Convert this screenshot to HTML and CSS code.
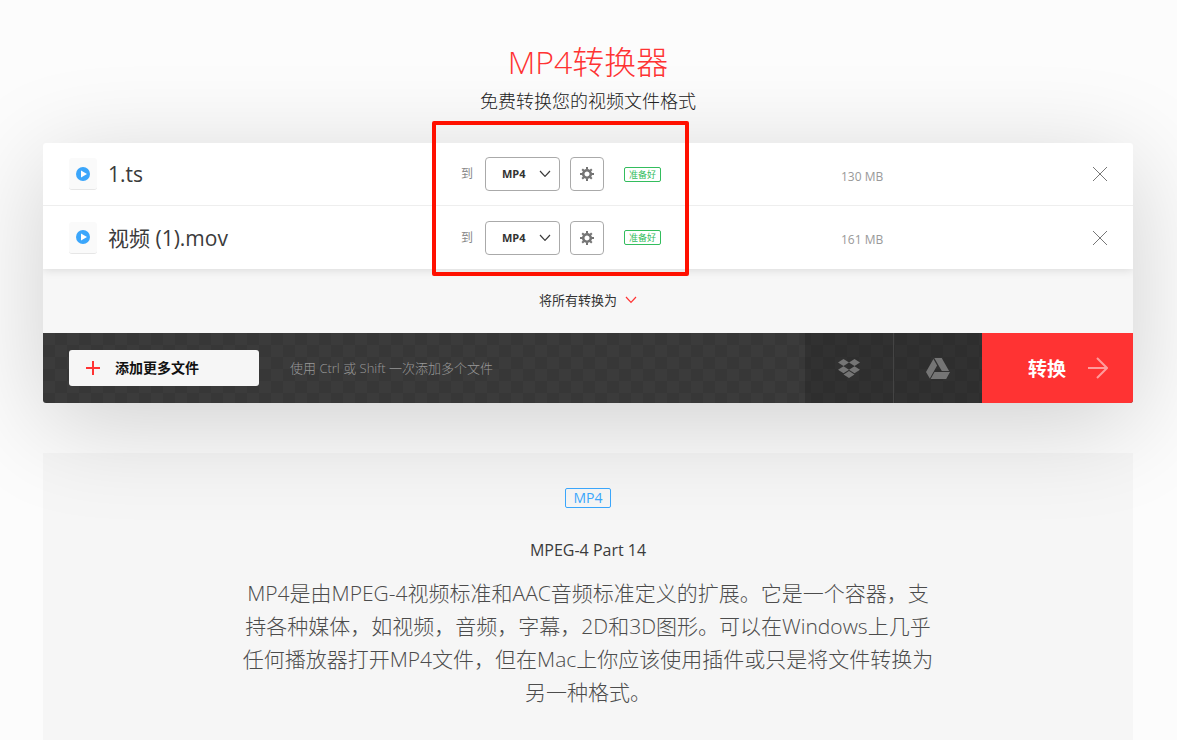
FILE: index.html
```html
<!DOCTYPE html>
<html lang="zh-CN">
<head>
<meta charset="utf-8">
<title>MP4转换器</title>
<link rel="stylesheet" href="styles.css">
</head>
<body>
<svg class="sprite" aria-hidden="true">
  <symbol id="play" viewBox="0 0 14 14"><circle cx="7" cy="7" r="7" fill="#3ba6fb"/><path d="M5 3.500 11 7 5 10.500z" fill="#fff"/></symbol>
  <symbol id="chevron" viewBox="0 0 12 8"><path d="M1 1l5 5.4L11 1" fill="none" stroke="currentColor" stroke-width="1.2"/></symbol>
  <symbol id="gear" viewBox="-7 -7 14 14">
    <circle r="3.8" fill="none" stroke="currentColor" stroke-width="2.6"/>
    <path d="M0-7v2.5M0 7V4.500M-7 0h2.500M7 0H4.500M-4.800-4.800l1.600 1.600M4.800 4.800 3.200 3.200M-4.800 4.800l1.600-1.600M4.800-4.800 3.200-3.200" stroke="currentColor" stroke-width="2"/>
  </symbol>
  <symbol id="cross" viewBox="0 0 14 14"><path d="M0 0l14 14M14 0 0 14" fill="none" stroke="currentColor"/></symbol>
</svg>
<main class="page">
  <header class="intro">
    <h1 class="title">MP4转换器</h1>
    <p class="subtitle">免费转换您的视频文件格式</p>
  </header>

  <section class="converter">
    <div class="card">
      <ul class="files">
        <li class="file">
          <div class="file-name"><span class="thumb"><svg class="play"><use href="#play"/></svg></span><span>1.ts</span></div>
          <div class="file-target">
            <label class="to" for="format-1">到</label>
            <div class="picker"><select class="format" id="format-1"><option>MP4</option></select><svg class="chevron"><use href="#chevron"/></svg></div>
            <button class="settings" type="button" aria-label="设置"><svg class="gear"><use href="#gear"/></svg></button>
            <span class="status">准备好</span>
          </div>
          <span class="size">130 MB</span>
          <button class="remove" type="button" aria-label="删除"><svg class="cross"><use href="#cross"/></svg></button>
        </li>
        <li class="file">
          <div class="file-name"><span class="thumb"><svg class="play"><use href="#play"/></svg></span><span>视频 (1).mov</span></div>
          <div class="file-target">
            <label class="to" for="format-2">到</label>
            <div class="picker"><select class="format" id="format-2"><option>MP4</option></select><svg class="chevron"><use href="#chevron"/></svg></div>
            <button class="settings" type="button" aria-label="设置"><svg class="gear"><use href="#gear"/></svg></button>
            <span class="status">准备好</span>
          </div>
          <span class="size">161 MB</span>
          <button class="remove" type="button" aria-label="删除"><svg class="cross"><use href="#cross"/></svg></button>
        </li>
      </ul>
      <div class="all">
        <button class="all-button" type="button">将所有转换为<svg class="all-chevron"><use href="#chevron"/></svg></button>
      </div>
      <div class="actions">
        <div class="adding">
          <button class="add" type="button"><svg class="plus" viewBox="0 0 14 14"><path d="M7 0v14M0 7h14" stroke="#f33" stroke-width="2"/></svg><span class="add-label">添加更多文件</span></button>
          <span class="hint">使用 Ctrl 或 Shift 一次添加多个文件</span>
        </div>
        <button class="cloud" type="button" aria-label="Dropbox"><svg class="dropbox" viewBox="0 0 22 19"><path d="M5.500 0 11 3.500 5.500 7 0 3.500zM16.500 0 22 3.500 16.500 7 11 3.500zM5.500 7.200 11 10.700 5.500 14.200 0 10.700zM16.500 7.200 22 10.700 16.500 14.200 11 10.700zM11 12 16.500 15.500 11 19 5.500 15.500z" fill="currentColor"/></svg></button>
        <button class="cloud cloud-last" type="button" aria-label="Google Drive"><svg class="drive" viewBox="0 0 24 21"><path d="M8.300 0h7.400l7.400 13h-7.300zM7.400 1l3.700 6.500L3.800 20.500 0 13.900zM8.500 14H24l-3.800 7H4.600z" fill="currentColor"/></svg></button>
        <button class="convert" type="button">转换<svg class="arrow" viewBox="0 0 20 22"><path d="M0 11h19M9 1l10 10L9 21" fill="none" stroke="currentColor" stroke-width="2"/></svg></button>
      </div>
    </div>
    <div class="highlight"></div>
  </section>

  <section class="info">
    <span class="tag">MP4</span>
    <h2 class="info-title">MPEG-4 Part 14</h2>
    <p class="info-text">MP4是由MPEG-4视频标准和AAC音频标准定义的扩展。它是一个容器，支持各种媒体，如视频，音频，字幕，2D和3D图形。可以在Windows上几乎任何播放器打开MP4文件，但在Mac上你应该使用插件或只是将文件转换为另一种格式。</p>
  </section>
</main>
</body>
</html>
```

FILE: styles.css
```css
* { box-sizing: border-box; }
body {
  margin: 0;
  background: #fcfcfc;
  color: #3b3b3b;
  font-family: "Open Sans", "Noto Sans CJK SC", sans-serif;
}
button, select { font-family: inherit; cursor: pointer; }
button { border: 0; padding: 0; background: none; }
svg { display: block; }
.sprite { position: absolute; width: 0; height: 0; }
.page { min-height: 100vh; padding: 40px 44px 0 43px; display: flex; flex-direction: column; }

.intro { text-align: center; padding-bottom: 29px; }
.title { margin: 0; color: #f33; font-size: 32px; font-weight: 300; line-height: 44px; }
.subtitle { margin: 4px 0 0; color: #222; font-size: 18px; font-weight: 300; line-height: 26px; }

.converter { position: relative; }
.card { border-radius: 3px; box-shadow: 0 20px 100px rgba(0, 0, 0, .18); overflow: hidden; }
.files { position: relative; list-style: none; margin: 0; padding: 0; background: #fff; box-shadow: 0 0 10px rgba(0, 0, 0, .15); }
.file { display: grid; grid-template-columns: 418fr 380fr 252fr 14px; align-items: center; height: 63px; padding-right: 26px; }
.file:not(:last-child) { border-bottom: 1px solid #eee; }
.file-name { display: flex; align-items: center; gap: 11px; padding-left: 26px; font-size: 21px; line-height: 28px; }
.thumb { display: flex; align-items: center; justify-content: center; width: 28px; height: 32px; background: #fafafa; border-radius: 3px; border-bottom: 1px solid #e6e6e6; }
.play { width: 14px; height: 14px; }
.file-target { display: flex; align-items: center; }
.to { width: 24px; font-size: 12px; line-height: 18px; color: #888; }
.picker { position: relative; width: 75px; margin-right: 10px; }
.format { appearance: none; display: block; width: 100%; height: 34px; padding: 0 16px 1px; border: 1px solid #aaa; border-radius: 4px; background: #fff; color: #333; font-size: 11px; font-weight: 700; }
.chevron { position: absolute; right: 9px; top: 13px; width: 12px; height: 8px; pointer-events: none; }
.settings { display: flex; align-items: center; justify-content: center; width: 34px; height: 34px; margin-right: 20px; border: 1px solid #aaa; border-radius: 4px; color: #747474; }
.gear { width: 14px; height: 14px; }
.status { border: 1px solid #33bd5d; border-radius: 2px; padding: 0 4px; color: #33bd5d; font-size: 9px; line-height: 13px; }
.size { padding-top: 4px; color: #999; font-size: 12px; }
.cross { width: 14px; height: 14px; color: #777; }

.all { display: flex; justify-content: center; align-items: center; height: 64px; padding-bottom: 2px; background: #f7f7f7; }
.all-button { display: flex; align-items: center; gap: 8px; color: #333; font-size: 13px; line-height: 20px; }
.all-chevron { width: 12px; height: 8px; color: #f33; }

.actions { display: flex; height: 70px; background: conic-gradient(#373737 25%, #3b3b3b 0 50%, #373737 0 75%, #3b3b3b 0) 0 0 / 24px 24px; }
.adding { flex: 1; display: flex; align-items: center; gap: 31px; padding-left: 26px; }
.add { display: flex; align-items: center; gap: 15px; width: 190px; height: 36px; padding-left: 17px; background: #f6f6f6; border-radius: 3px; color: #111; font-size: 14px; font-weight: 700; }
.add-label { padding-bottom: 2px; }
.plus { width: 14px; height: 14px; }
.hint { padding-bottom: 2px; color: #999; font-size: 13px; font-weight: 300; }
.cloud { display: flex; align-items: center; justify-content: center; width: 88px; background: rgba(0, 0, 0, .16); color: #757575; }
.cloud-last { width: 89px; border-left: 1px solid #444; }
.dropbox { width: 22px; height: 19px; }
.drive { width: 24px; height: 21px; }
.convert { display: flex; align-items: center; justify-content: flex-end; gap: 22px; width: 151px; padding-right: 25px; background: #f33; color: #fff; font-size: 19px; font-weight: 700; }
.arrow { width: 20px; height: 22px; color: #ff9c9c; }

.highlight { position: absolute; left: 389px; top: -22px; width: 257px; height: 155px; border: 4px solid #ff1000; border-radius: 2px; pointer-events: none; }

.info { position: relative; flex: 1; display: flex; flex-direction: column; align-items: center; margin-top: 50px; padding: 35px 20px 27px; background: rgba(0, 0, 0, .024); text-align: center; }
.tag { padding: 0 7px; border: 1px solid #3ba6fb; border-radius: 2px; color: #3ba6fb; font-size: 14px; line-height: 18px; }
.info-title { margin: 31px 0 0; font-size: 16px; font-weight: 400; line-height: 22px; }
.info-text { max-width: 700px; margin: 16px 0 0; font-size: 21px; font-weight: 300; line-height: 33px; color: #4c4c4c; }
```
